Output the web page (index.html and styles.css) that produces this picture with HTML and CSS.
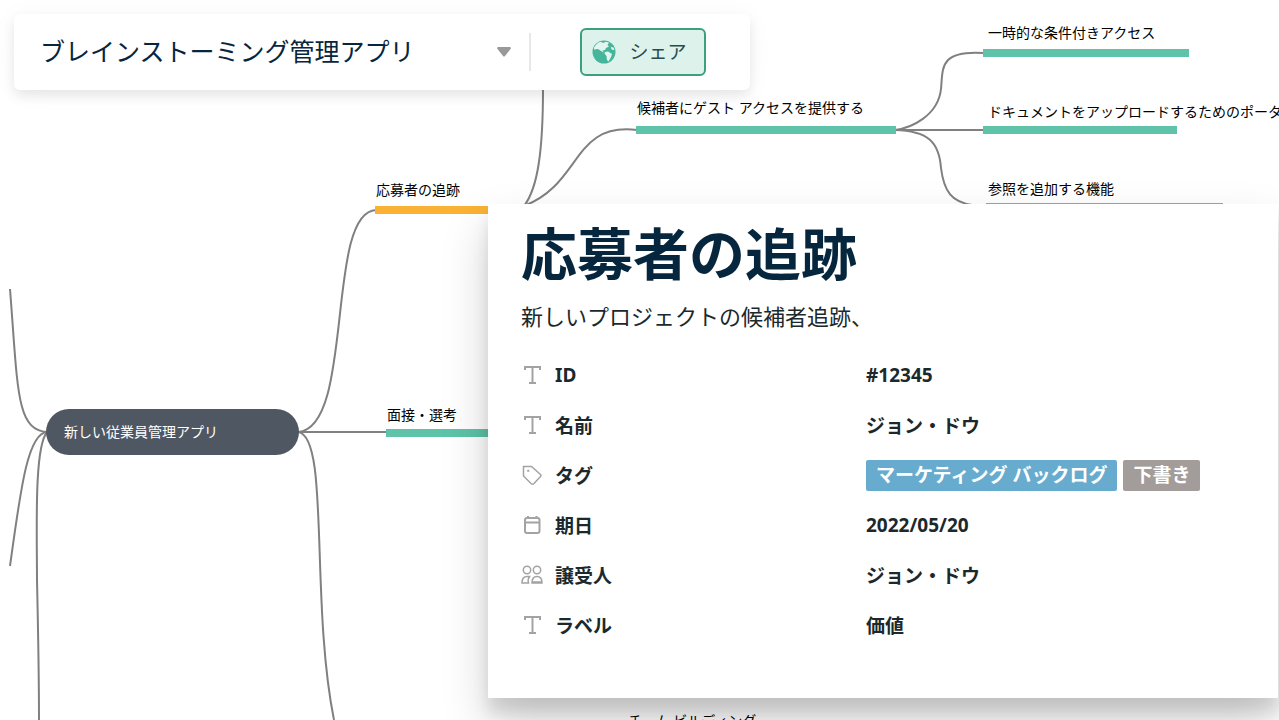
FILE: index.html
```html
<!DOCTYPE html>
<html lang="ja">
<head>
<meta charset="utf-8">
<meta name="viewport" content="width=device-width, initial-scale=1">
<title>ブレインストーミング管理アプリ</title>
<link rel="stylesheet" href="styles.css">
</head>
<body>
<main class="canvas">
  <svg class="links" aria-hidden="true">
    <path d="M10 289C18 390 16 430 47 432"/>
    <path d="M10 566C20 495 27 433 47 432"/>
    <path d="M47 432C34 448 37 530 37 580Q39 670 39 720"/>
    <path d="M298 432C355 428 325 212 376 210"/>
    <path d="M298 432H387"/>
    <path d="M298 432C330 436 310 600 334 720"/>
    <path d="M543 88C543 150 538 188 524 206"/>
    <path d="M524 206C582 184 572 122 637 130"/>
    <path d="M895 130C911 128 938 116 941 89C943 68 939 50 984 53"/>
    <path d="M895 130H984"/>
    <path d="M895 130C927 131 939 141 941 168C944 192 952 202 972 205"/>
  </svg>

  <div class="node node-root">新しい従業員管理アプリ</div>
  <div class="node node-tracking">応募者の追跡</div>
  <div class="node node-interview">面接・選考</div>
  <div class="node node-guest">候補者にゲスト アクセスを提供する</div>
  <div class="node node-access">一時的な条件付きアクセス</div>
  <div class="node node-portal">ドキュメントをアップロードするためのポータル</div>
  <div class="node node-reference">参照を追加する機能</div>
  <div class="node node-team">チーム ビルディング</div>

  <header class="toolbar">
    <button class="title" type="button">
      <span>ブレインストーミング管理アプリ</span>
      <svg class="caret" viewBox="0 0 14 10" aria-hidden="true"><path d="M1 0h12q1.500 .5.500 2L8 9q-1 1-2 0L.5 2Q-.5.5 1 0z"/></svg>
    </button>
    <button class="share" type="button">
      <svg class="globe" viewBox="0 0 24 24" aria-hidden="true">
        <circle cx="12" cy="12" r="11.500"/>
        <path d="M2 7.500Q5 2.500 9 1.800L11 3l3-1.200L17 2.500 15.500 5 17 6.500 14 8l-1 2-2.500.5L12 12.500 9 11 6 9 2 9.500zM13 12l3-.5 4 2.500-1 3-2.500 4.500L15 20l-.5-4-2-2.500zM19 7l2.500.5 1 2.500-3-.5z"/>
      </svg>
      <span>シェア</span>
    </button>
  </header>

  <section class="card">
    <h1>応募者の追跡</h1>
    <p class="summary">新しいプロジェクトの候補者追跡、</p>
    <dl class="fields">
      <div class="field">
        <dt><svg class="icon bold" viewBox="0 0 22 22" aria-hidden="true"><path d="M4 6V3h15v3M11.500 3v16M8 19h7"/></svg>ID</dt>
        <dd>#12345</dd>
      </div>
      <div class="field">
        <dt><svg class="icon bold" viewBox="0 0 22 22" aria-hidden="true"><path d="M4 6V3h15v3M11.500 3v16M8 19h7"/></svg>名前</dt>
        <dd>ジョン・ドウ</dd>
      </div>
      <div class="field">
        <dt><svg class="icon" viewBox="0 0 22 22" aria-hidden="true"><path d="M2.500 2.500h8l9 8q1 1 0 2L13 19.500q-1.500 1.500-3 0L2.500 12zM7 6.500h.5v.5H7z"/></svg>タグ</dt>
        <dd><span class="tag tag-blue">マーケティング バックログ</span><span class="tag tag-gray">下書き</span></dd>
      </div>
      <div class="field">
        <dt><svg class="icon bold" viewBox="0 0 22 22" aria-hidden="true"><rect x="4" y="4" width="14.500" height="15" rx="2"/><path d="M4 8.500h14.500M7 2v2M15.500 2v2"/></svg>期日</dt>
        <dd>2022/05/20</dd>
      </div>
      <div class="field">
        <dt><svg class="icon" viewBox="0 0 22 22" aria-hidden="true"><circle cx="6" cy="6" r="3.700"/><circle cx="16" cy="6" r="3.700"/><path d="M8.500 12.500H6q-5 0-5 6.500h6.500q-1-4 1-6.500zM11 19q0-6.500 5-6.500t5 6.500zM11 18h10"/></svg>譲受人</dt>
        <dd>ジョン・ドウ</dd>
      </div>
      <div class="field">
        <dt><svg class="icon bold" viewBox="0 0 22 22" aria-hidden="true"><path d="M4 6V3h15v3M11.500 3v16M8 19h7"/></svg>ラベル</dt>
        <dd>価値</dd>
      </div>
    </dl>
  </section>
</main>
</body>
</html>
```
FILE: styles.css
```css
* {
  box-sizing: border-box;
}

body {
  margin: 0;
  background: #fff;
  color: #1b292c;
  font-family: "Noto Sans", "Noto Sans CJK JP", sans-serif;
}

.canvas {
  position: relative;
  height: 100vh;
  overflow: hidden;
}

.links {
  position: absolute;
  inset: 0;
  width: 100%;
  height: 100%;
  fill: none;
  stroke: #808080;
  stroke-width: 2;
}

/* Mind map nodes */
.node {
  position: absolute;
  color: #000;
  font-size: 14px;
  line-height: 20px;
  white-space: nowrap;
  padding: 0 5px 10px;
  border-bottom: 8px solid #5ec3a8;
}

.node-root {
  left: 46px;
  top: 409px;
  width: 253px;
  padding: 13px 18px;
  border: 0;
  border-radius: 23px;
  background: #4f5762;
  color: #fff;
}

.node-tracking {
  left: 375px;
  top: 180px;
  width: 130px;
  padding: 0 1px 6px;
  border-color: #f9b233;
}

.node-interview {
  left: 386px;
  top: 405px;
  width: 120px;
  padding: 0 1px 4px;
}

.node-guest {
  left: 636px;
  top: 98px;
  width: 260px;
  padding: 0 1px 8px;
}

.node-access {
  left: 983px;
  top: 23px;
  width: 206px;
  padding-bottom: 6px;
}

.node-portal {
  left: 983px;
  top: 102px;
  width: 194px;
  padding-bottom: 4px;
}

.node-reference {
  left: 986px;
  top: 179px;
  width: 237px;
  padding: 0 2px 4px;
}

.node-team {
  left: 623px;
  top: 711px;
  width: 200px;
}

/* Toolbar */
.toolbar {
  position: absolute;
  left: 14px;
  top: 14px;
  display: flex;
  align-items: center;
  gap: 49px;
  padding: 14px 44px 14px 26px;
  border-radius: 6px;
  background: #fff;
  box-shadow: 0 6px 12px rgba(0, 0, 0, .08), 0 2px 28px rgba(0, 0, 0, .04);
}

button {
  font-family: inherit;
  cursor: pointer;
}

.title {
  display: flex;
  align-items: center;
  gap: 82px;
  height: 38px;
  padding: 0 18px 0 0;
  border: 0;
  border-right: 2px solid #e8e8e8;
  background: none;
  color: #06263d;
  font-size: 25px;
}

.title span {
  padding-bottom: 5px;
}

.caret {
  width: 14px;
  height: 10px;
  fill: #999;
}

.share {
  display: flex;
  align-items: center;
  gap: 14px;
  height: 48px;
  padding: 0 17px 0 10px;
  border: 2px solid #3c9f80;
  border-radius: 6px;
  background: #dcf2eb;
  color: #294b4b;
  font-size: 19px;
}

.share span {
  padding-bottom: 2px;
}

.globe {
  width: 24px;
  height: 24px;
  fill: #45b69b;
}

.globe path {
  fill: #e4f5f0;
}

/* Detail card */
.card {
  position: absolute;
  left: 488px;
  right: 1px;
  top: 204px;
  padding: 18px 33px 48px;
  background: #fff;
  box-shadow: 0 24px 44px rgba(0, 0, 0, .18), 0 14px 14px rgba(0, 0, 0, .1);
}

h1 {
  margin: 0;
  color: #06263d;
  font-size: 56px;
  line-height: 62px;
}

.summary {
  margin: 16px 0 18px;
  font-size: 22px;
  line-height: 32px;
}

.fields {
  margin: 0;
}

.field {
  display: grid;
  grid-template-columns: 345px 1fr;
  align-items: center;
  height: 50px;
  font-size: 19px;
  font-weight: 700;
}

.field dt,
.field dd {
  display: flex;
  align-items: center;
  margin: 0;
}

.field dt {
  gap: 12px;
}

.field dd {
  gap: 6px;
}

.icon {
  width: 22px;
  height: 22px;
  fill: none;
  stroke: #a3a3a3;
  stroke-width: 1.5;
}

.icon.bold {
  stroke-width: 2;
}

.tag {
  padding: 0 10px;
  border-radius: 2px;
  color: #fff;
  line-height: 31px;
  white-space: nowrap;
}

.tag-blue {
  background: #67acce;
}

.tag-gray {
  background: #a29d9b;
}
```
